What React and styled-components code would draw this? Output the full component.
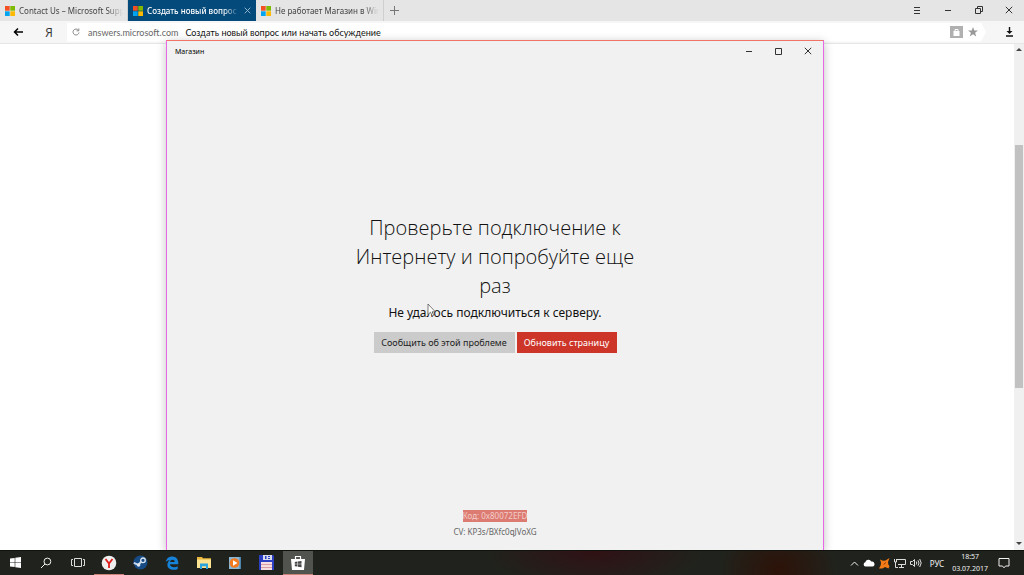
import React from "react";
import styled, { createGlobalStyle } from "styled-components";

const GlobalStyle = createGlobalStyle`
  * {
    box-sizing: border-box;
  }

  body {
    margin: 0;
    font-family: "Noto Sans", "Open Sans", sans-serif;
    font-size: 9px;
    color: #222;
  }

  button,
  input {
    margin: 0;
    padding: 0;
    border: 0;
    background: none;
    font-family: inherit;
    color: inherit;
  }

  svg {
    display: block;
    flex: none;
  }
`;

const Desktop = styled.div`
  position: relative;
  display: flex;
  flex-direction: column;
  height: 100vh;
  overflow: hidden;
  background: #fff;
`;

const TabBar = styled.header`
  display: flex;
  flex: none;
  height: 21px;
  background: #e5e5e5;
`;

const Tab = styled.div`
  display: flex;
  align-items: center;
  gap: 4px;
  width: 128px;
  padding: 0 4px 0 5px;
  border-right: 1px solid ${({ $active }) => ($active ? "#044a7a" : "#cfcfcf")};
  background: ${({ $active }) => ($active ? "#044a7a" : "#e5e5e5")};
  color: ${({ $active }) => ($active ? "#fff" : "#444")};
`;

const TabTitle = styled.button`
  flex: 1;
  min-width: 0;
  font-size: 8px;
  font-weight: ${({ $active }) => ($active ? 500 : 400)};
  line-height: 20px;
  text-align: left;
  white-space: nowrap;
  mask-image: linear-gradient(to left, transparent, #000 16px);
`;

const IconButton = styled.button`
  display: grid;
  place-items: center;
  width: ${({ $width }) => $width || 20}px;
  height: 20px;
  color: ${({ $color }) => $color || "#333"};
`;

const CloseTab = styled(IconButton)`
  width: 8px;
`;

const WindowButtons = styled.div`
  display: flex;
  margin-left: auto;
`;

const Toolbar = styled.div`
  display: flex;
  flex: none;
  align-items: center;
  height: 23px;
  padding-left: 3px;
  border-bottom: 1px solid #e6e6e6;
  background: #f6f6f6;
  font-family: Lato, "Noto Sans", sans-serif;
`;

const YandexButton = styled(IconButton)`
  width: 32px;
  font-family: "Open Sans", sans-serif;
  font-size: 12px;
  font-weight: 400;
`;

const Omnibox = styled.form`
  display: flex;
  flex: 1;
  align-items: center;
  height: 19px;
  margin: 0 8px 0 2px;
  padding-right: 3px;
  background: #fff;
  clip-path: polygon(0 0, calc(100% - 5px) 0, 100% 50%, calc(100% - 5px) 100%, 0 100%);
`;

const Host = styled.label`
  padding: 0 7px 0 3px;
  font-size: 9px;
  color: #666;
`;

const Address = styled.input`
  flex: 1;
  min-width: 0;
  font-size: 9px;
  color: #111;
  outline: none;
`;

const Lock = styled.span`
  display: grid;
  place-items: center;
  width: 13px;
  height: 12px;
  background: #b0b0b0;
`;

const Page = styled.main`
  display: flex;
  flex: 1;
  justify-content: flex-end;
  min-height: 0;
`;

const ScrollTrack = styled.div`
  display: flex;
  flex-direction: column;
  align-items: center;
  width: 10px;
  padding: 3px 0 4px;
  background: #f0f0f0;
  color: #444;
`;

const ScrollSpace = styled.div`
  flex: ${({ $grow }) => $grow};
`;

const ScrollThumb = styled.div`
  flex: 243;
  width: 8px;
  background: #c1c1c1;
`;

const StoreWindow = styled.section`
  position: absolute;
  top: 40px;
  right: 200px;
  bottom: 25px;
  left: 166px;
  display: flex;
  flex-direction: column;
  border: 1px solid #e668e6;
  border-top-color: #f07468;
  border-bottom: 0;
  background: #f1f1f1;
  box-shadow: 0 2px 9px rgba(0, 0, 0, 0.25);
`;

const TitleBar = styled.div`
  display: flex;
  align-items: center;
  justify-content: space-between;
  height: 20px;
  padding-left: 8px;
  font-size: 7px;
  color: #000;
`;

const Message = styled.div`
  display: flex;
  flex: 1;
  flex-direction: column;
  align-items: center;
  padding-top: 152px;
  text-align: center;
`;

const Heading = styled.h1`
  width: 300px;
  margin: 0;
  font-family: "Open Sans", "Noto Sans", sans-serif;
  font-size: 20px;
  font-weight: 300;
  line-height: 29px;
  color: #111;
`;

const Detail = styled.p`
  margin: 3px 0 9px;
  font-size: 12px;
  line-height: 20px;
  color: #111;
`;

const Actions = styled.div`
  display: flex;
  gap: 2px;
`;

const Action = styled.button`
  height: 21px;
  width: ${({ $primary }) => ($primary ? 100 : 141)}px;
  background: ${({ $primary }) => ($primary ? "#cd3529" : "#cbcbcb")};
  color: ${({ $primary }) => ($primary ? "#fff" : "#222")};
  font-size: 9px;
  line-height: 21px;
  white-space: nowrap;
`;

const Codes = styled.div`
  display: flex;
  flex-direction: column;
  align-items: center;
  gap: 4px;
  margin-top: auto;
  padding-bottom: 12px;
  font-size: 8px;
  line-height: 12px;
  color: #666;
`;

const ErrorCode = styled.span`
  background: #dc7b71;
  color: #f3cdc9;
`;

const Taskbar = styled.footer`
  position: relative;
  display: flex;
  flex: none;
  justify-content: space-between;
  height: 25px;
  border-top: 1px solid #10120e;
  background: radial-gradient(ellipse 110px 40px at 58% 0, #301114, transparent),
    radial-gradient(ellipse 60px 50px at 76% 80%, #2d1208, transparent), #20231d;
  color: #f2f2f2;
`;

const Apps = styled.nav`
  display: flex;
  justify-content: space-between;
  width: 313px;
`;

const AppButton = styled.button`
  display: grid;
  place-items: center;
  width: 30px;
  border-bottom: 1px solid ${({ $running }) => ($running ? "#c98379" : "transparent")};
  background: ${({ $active }) => ($active ? "#51534f" : "transparent")};
`;

const Tray = styled.div`
  display: flex;
  align-items: center;
  gap: 4px;
  padding-right: 14px;
`;

const Language = styled.button`
  padding: 0 4px;
  font-size: 8px;
`;

const Clock = styled.time`
  padding-right: 6px;
  font-size: 7px;
  line-height: 12px;
  text-align: center;
`;

const Pointer = styled.svg`
  position: absolute;
  top: 303px;
  left: 427px;
`;

const MicrosoftLogo = () => (
  <svg width="10" height="10" viewBox="0 0 10 10">
    <path fill="#f25022" d="M0 0h4.7v4.7H0z" />
    <path fill="#7fba00" d="M5.3 0H10v4.7H5.3z" />
    <path fill="#00a4ef" d="M0 5.3h4.7V10H0z" />
    <path fill="#ffb900" d="M5.3 5.3H10V10H5.3z" />
  </svg>
);

const LineIcon = ({ size = 8, box = 8, weight = 1, children }) => (
  <svg
    width={size}
    height={size}
    viewBox={`0 0 ${box} ${box}`}
    fill="none"
    stroke="currentColor"
    strokeWidth={weight}
  >
    {children}
  </svg>
);

const Cross = ({ size }) => (
  <LineIcon size={size}>
    <path d="M.8.8l6.400 6.400M7.200.8L.8 7.200" />
  </LineIcon>
);

const Minus = () => (
  <LineIcon>
    <path d="M1 4.5h6" />
  </LineIcon>
);

const tabs = [
  { title: "Contact Us – Microsoft Supp" },
  { title: "Создать новый вопрос и", active: true },
  { title: "Не работает Магазин в Win" },
];

const apps = [
  {
    name: "Пуск",
    icon: (
      <svg width="11" height="11" viewBox="0 0 11 11" fill="#fff">
        <path d="M0 1.6L4.7.9v4.3H0zM5.3.8L11 0v5.2H5.3zM0 5.8h4.7v4.3L0 9.4zM5.3 5.8H11V11l-5.7-.8z" />
      </svg>
    ),
  },
  {
    name: "Поиск",
    icon: (
      <LineIcon size={12} box={12}>
        <circle cx="7.4" cy="4.5" r="3.4" />
        <path d="M5 7L1 11" />
      </LineIcon>
    ),
  },
  {
    name: "Представление задач",
    icon: (
      <svg width="14" height="11" viewBox="0 0 14 11" fill="none" stroke="#ddd">
        <path d="M3.5 1.5h7v8h-7zM2 2.5H.5v6H2M12 2.5h1.5v6H12" />
      </svg>
    ),
  },
  {
    name: "Yandex",
    running: true,
    icon: (
      <svg width="16" height="16" viewBox="0 0 16 16">
        <circle cx="8" cy="8" r="7.3" fill="#eee" />
        <path d="M4.500 4L8 8.500 11.500 4M8 8.300V13" fill="none" stroke="#e01b1b" strokeWidth="1.8" />
      </svg>
    ),
  },
  {
    name: "Steam",
    icon: (
      <svg width="15" height="15" viewBox="0 0 15 15">
        <circle cx="7.5" cy="7.5" r="7" fill="#174b86" />
        <path d="M.8 7.8l4.5 2 3-3.2" fill="none" stroke="#c9d8e8" strokeWidth="2" />
        <circle cx="10" cy="5.3" r="2.3" fill="#174b86" stroke="#dde6ef" strokeWidth="1.3" />
        <circle cx="5.6" cy="10" r="1.8" fill="#dde6ef" />
      </svg>
    ),
  },
  {
    name: "Edge",
    icon: (
      <svg width="14" height="14" viewBox="0 0 14 14" fill="#1683d8">
        <path d="M.7 6.3C1.2 2.500 4 .4 7.200.4c3.900 0 6.100 2.900 6.100 6.300v1.500H5c.1 2.200 2 3 4.100 3 1.400 0 2.600-.4 3.600-1v2.700c-1.100.6-2.600.9-4.200.9-3.500 0-6.100-1.800-6.100-5C2.400 6.700 3.500 5 5.100 4.100c-2 .1-3.500.9-4.400 2.200zM5.100 6h4.600c0-1.500-.8-2.300-2.200-2.300C6.200 3.700 5.300 4.600 5.100 6z" />
      </svg>
    ),
  },
  {
    name: "Проводник",
    icon: (
      <svg width="14" height="12" viewBox="0 0 14 12">
        <path fill="#e9b83c" d="M0 0h5l1 1.300h8V11H0z" />
        <path fill="#fbe391" d="M0 2.500h14V11H0z" />
        <path fill="#2ba3dc" d="M3 6.500h8V12H9V9.200H5V12H3z" />
      </svg>
    ),
  },
  {
    name: "Проигрыватель",
    icon: (
      <svg width="14" height="14" viewBox="0 0 14 14">
        <path fill="#89b7d4" d="M1 1h12v12H1z" />
        <path fill="#4b84ad" d="M11.500 1H13v12h-1.500z" />
        <circle cx="6.500" cy="7" r="4.800" fill="#f37a1e" />
        <path fill="#fff" d="M5 4.200L9.500 7 5 9.800z" />
      </svg>
    ),
  },
  {
    name: "Total Commander",
    icon: (
      <svg width="15" height="15" viewBox="0 0 15 15">
        <path fill="#2b3fc0" d="M0 0h14l1 1v14H0z" />
        <path fill="#d9dcec" d="M4 0h9v5H4z" />
        <path fill="#2b3fc0" d="M6 1h1.500v3H6zM9 1h2v1H9zM9 3h2v1H9z" />
        <path fill="#f7dfe1" d="M2 7h11v8H2z" />
        <path stroke="#dd9ca4" d="M2 9.500h11M2 12.500h11" />
      </svg>
    ),
  },
  {
    name: "Магазин",
    running: true,
    active: true,
    icon: (
      <svg width="14" height="15" viewBox="0 0 14 15">
        <path d="M4.500 4V1.500h5V4" fill="none" stroke="#fff" strokeWidth="1.200" />
        <path fill="#fff" d="M0 4h14l-1 11H1z" />
        <path fill="#444" d="M3.800 7l2.700-.4v2.200H3.800zM7 6.500l3.500-.5v2.800H7zM3.800 9.300h2.700v2.300l-2.700-.4zM7 9.300h3.500v2.900L7 11.700z" />
      </svg>
    ),
  },
];

const BrowserTabs = () => (
  <TabBar>
    {tabs.map(({ title, active }) => (
      <Tab key={title} $active={active}>
        <MicrosoftLogo />
        <TabTitle $active={active}>{title}</TabTitle>
        {active && (
          <CloseTab aria-label="Закрыть вкладку" $color="#9fc0d8">
            <Cross size={7} />
          </CloseTab>
        )}
      </Tab>
    ))}
    <IconButton aria-label="Новая вкладка" $color="#777">
      <LineIcon size={9} box={9}>
        <path d="M4.500 0v9M0 4.500h9" />
      </LineIcon>
    </IconButton>
    <WindowButtons>
      <IconButton aria-label="Меню" $width={31}>
        <LineIcon>
          <path d="M1 1.500h6M1 4.500h6M1 7.500h6" />
        </LineIcon>
      </IconButton>
      <IconButton aria-label="Свернуть" $width={31}>
        <Minus />
      </IconButton>
      <IconButton aria-label="Восстановить" $width={31}>
        <LineIcon>
          <path d="M.5 2.500h5v5h-5zM2.500 2.500v-2h5v5H5.500" />
        </LineIcon>
      </IconButton>
      <IconButton aria-label="Закрыть" $width={30}>
        <Cross />
      </IconButton>
    </WindowButtons>
  </TabBar>
);

const BrowserToolbar = () => (
  <Toolbar>
    <IconButton aria-label="Назад" $width={30} $color="#000">
      <LineIcon size={10} box={10} weight={1.5}>
        <path d="M10 5H1.500M5 1.500L1.500 5 5 8.500" />
      </LineIcon>
    </IconButton>
    <YandexButton aria-label="Яндекс">Я</YandexButton>
    <Omnibox>
      <IconButton type="button" aria-label="Обновить" $width={18} $color="#888">
        <LineIcon>
          <path d="M6.500 2.300A3 3 0 1 0 7 4.500M6.800.5v2.300H4.500" />
        </LineIcon>
      </IconButton>
      <Host htmlFor="address">answers.microsoft.com</Host>
      <Address id="address" defaultValue="Создать новый вопрос или начать обсуждение" />
      <Lock>
        <svg width="7" height="8" viewBox="0 0 7 8">
          <path d="M2 3.500V1.500h3v2" fill="none" stroke="#fff" />
          <path d="M.5 3h6v5h-6z" fill="#fff" />
        </svg>
      </Lock>
      <IconButton type="button" aria-label="В закладки" $color="#999">
        <svg width="10" height="10" viewBox="0 0 10 10" fill="currentColor">
          <path d="M5 0l1.300 3.500H10L7.100 5.800 8.200 9.500 5 7.300 1.800 9.500l1.100-3.700L0 3.500h3.700z" />
        </svg>
      </IconButton>
    </Omnibox>
    <IconButton aria-label="Загрузки" $width={30} $color="#111">
      <svg width="9" height="10" viewBox="0 0 9 10" fill="currentColor">
        <path d="M3.800 0h1.400v4H7.500l-3 3-3-3h2.300zM1 8.300h7v1.400H1z" />
      </svg>
    </IconButton>
  </Toolbar>
);

const Store = () => (
  <StoreWindow>
    <TitleBar>
      <span>Магазин</span>
      <WindowButtons>
        <IconButton aria-label="Свернуть" $width={29}>
          <Minus />
        </IconButton>
        <IconButton aria-label="Развернуть" $width={30}>
          <LineIcon>
            <path d="M1.500 1.500h6v6h-6z" />
          </LineIcon>
        </IconButton>
        <IconButton aria-label="Закрыть" $width={30}>
          <Cross />
        </IconButton>
      </WindowButtons>
    </TitleBar>
    <Message>
      <Heading>Проверьте подключение к Интернету и попробуйте еще раз</Heading>
      <Detail>Не удалось подключиться к серверу.</Detail>
      <Actions>
        <Action>Сообщить об этой проблеме</Action>
        <Action $primary>Обновить страницу</Action>
      </Actions>
      <Codes>
        <ErrorCode>Код: 0x80072EFD</ErrorCode>
        <span>CV: KP3s/BXfc0qJVoXG</span>
      </Codes>
    </Message>
  </StoreWindow>
);

const SystemTray = () => (
  <Tray>
    <LineIcon size={9} box={9}>
      <path d="M1 6.500L4.500 3 8 6.500" />
    </LineIcon>
    <svg width="12" height="8" viewBox="0 0 12 8" fill="#fff">
      <path d="M2.500 7.500a2.200 2.200 0 0 1-.2-4.300A3.200 3.200 0 0 1 8.300 2.500a2.500 2.500 0 0 1 1.200 5z" />
    </svg>
    <svg width="11" height="11" viewBox="0 0 11 11">
      <path
        fill="#f47b16"
        d="M1 1.500l3 1.200L6.500 2.500 10.500 0 9 4l.3 2.500 1.200 1.500-1 2.500L6 9l-2.500 1.500L0 10.500l1.800-3.500L2 4.500z"
      />
      <path d="M5 6.500l1.500-2" stroke="#7d3606" />
    </svg>
    <svg width="12" height="10" viewBox="0 0 12 10" fill="none" stroke="#ddd">
      <path d="M3 1.500h8.500v5H4M7.500 6.500v3M5 9.500h5M.5 1v3h2V1M1.500 4v5.500H4" />
    </svg>
    <svg width="12" height="10" viewBox="0 0 12 10" fill="none" stroke="#ddd">
      <path d="M.5 3.500h2l2-2v7l-2-2h-2zM6.300 3.500q1 1.500 0 3M8 2.300q2 2.700 0 5.400M9.700 1q3 4 0 8" />
    </svg>
    <Language>РУС</Language>
    <Clock>
      18:57
      <br />
      03.07.2017
    </Clock>
    <LineIcon size={12} box={12}>
      <path d="M1 1.500h10v7.500H7.500L6 10.800 4.500 9H1z" />
    </LineIcon>
  </Tray>
);

const App = () => {
  return (
    <>
      <GlobalStyle />
      <Desktop>
        <BrowserTabs />
        <BrowserToolbar />
        <Page>
          <ScrollTrack>
            <svg width="6" height="4" viewBox="0 0 6 4" fill="currentColor">
              <path d="M0 4l3-3 3 3z" />
            </svg>
            <ScrollSpace $grow={94} />
            <ScrollThumb />
            <ScrollSpace $grow={154} />
            <svg width="6" height="4" viewBox="0 0 6 4" fill="currentColor">
              <path d="M0 0l3 3 3-3z" />
            </svg>
          </ScrollTrack>
        </Page>
        <Store />
        <Taskbar>
          <Apps>
            {apps.map(({ name, icon, running, active }) => (
              <AppButton key={name} aria-label={name} $running={running} $active={active}>
                {icon}
              </AppButton>
            ))}
          </Apps>
          <SystemTray />
        </Taskbar>
        <Pointer width="9" height="14" viewBox="0 0 9 14">
          <path
            d="M1 1v10.500l2.500-2.300 1.700 3.800 1.500-.7L5.200 8.800H8.300z"
            fill="#fff"
            stroke="#444"
            strokeWidth=".7"
          />
        </Pointer>
      </Desktop>
    </>
  );
};

export default App;
